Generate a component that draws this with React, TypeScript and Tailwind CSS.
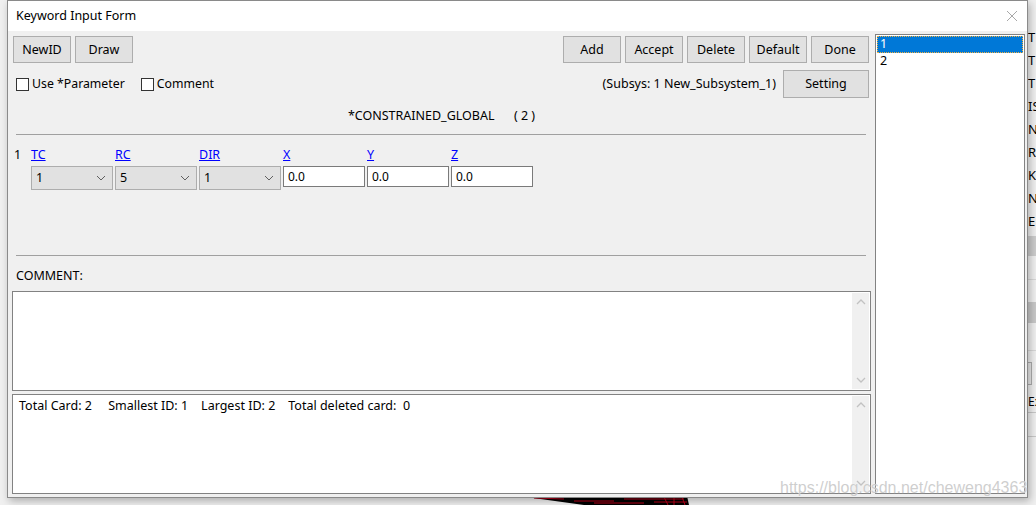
import React from "react";

const font = "font-['Noto_Sans','Liberation_Sans',sans-serif]";

function Btn({ label, w = "w-[58px]", h = "h-[27px]" }: { label: string; w?: string; h?: string }) {
  return (
    <div
      className={`${w} ${h} flex items-center justify-center bg-[#e1e1e1] border border-[#adadad] text-[12.5px] text-black pt-px`}
    >
      {label}
    </div>
  );
}

function Check({ label }: { label: string }) {
  return (
    <div className="flex items-center gap-[3px]">
      <div className="w-[13px] h-[13px] bg-white border border-[#333333]" />
      <span className="text-[12.3px] text-black leading-none">{label}</span>
    </div>
  );
}

function Chevron({ up, className = "" }: { up?: boolean; className?: string }) {
  return (
    <svg width="10" height="6" viewBox="0 0 10 6" className={className}>
      <path d={up ? "M1 5 L5 1 L9 5" : "M1 1 L5 5 L9 1"} fill="none" stroke="#c2c2c2" strokeWidth="1.3" />
    </svg>
  );
}

function Select({ value }: { value: string }) {
  return (
    <div className="w-[82px] h-[24px] bg-[#e1e1e1] border border-[#adadad] flex items-center justify-between pl-[4px] pr-[6px]">
      <span className="text-[12.5px] text-black">{value}</span>
      <svg width="10" height="6" viewBox="0 0 10 6">
        <path d="M1 1 L5 5 L9 1" fill="none" stroke="#606060" strokeWidth="1" />
      </svg>
    </div>
  );
}

function TextInput({ value }: { value: string }) {
  return (
    <div className="w-[82px] h-[21px] bg-white border border-[#7a7a7a] flex items-center pl-[4px]">
      <span className="text-[12px] text-black">{value}</span>
    </div>
  );
}

function Area({ children }: { children?: React.ReactNode }) {
  return (
    <div className="ml-[4px] w-[859px] h-[100px] bg-white border border-[#828282] flex">
      <div className="flex-1 pl-[6px] pt-[2px] text-[12.5px] text-black whitespace-pre">{children}</div>
      <div className="w-[17px] mt-[1px] mb-[1px] mr-[1px] bg-[#f0f0f0] flex flex-col items-center justify-between">
        <Chevron up className="mt-[6px]" />
        <Chevron className="mb-[6px]" />
      </div>
    </div>
  );
}

export default function App() {
  const bgLetters = ["T", "T", "T", "IS", "N", "R", "K", "N", "E"];
  return (
    <div className={`relative w-[1036px] h-[505px] overflow-hidden bg-[#f0f0f0] ${font}`}>
      {/* desktop background app (behind the window) */}
      <div className="absolute left-[1028px] top-[26px] flex flex-col text-[13px] text-black">
        {bgLetters.map((l, i) => (
          <div key={i} className="h-[23px] leading-[23px]">
            {l}
          </div>
        ))}
      </div>
      <div className="absolute left-[1026px] top-[236px] w-[10px] h-[20px] bg-[#cccccc]" />
      <div className="absolute left-[1026px] top-[279px] w-[10px] h-px bg-[#d8d8d8]" />
      <div className="absolute left-[1026px] top-[302px] w-[10px] h-[21px] bg-[#c8c8c8]" />
      <div className="absolute left-[1026px] top-[350px] w-[10px] h-px bg-[#d8d8d8]" />
      <div className="absolute left-[1024px] top-[362px] w-[8px] h-[23px] border border-[#adadad] bg-[#e8e8e8]" />
      <div className="absolute left-[1028px] top-[393px] text-[12px] text-black leading-[18px]">Ex</div>
      <div className="absolute left-[1026px] top-[412px] w-[10px] h-px bg-[#c8c8c8]" />
      <div className="absolute left-[1026px] top-[436px] w-[10px] h-px bg-[#c8c8c8]" />
      <svg className="absolute left-[524px] top-[496px]" width="168" height="9" viewBox="0 0 168 9">
        <polygon points="2,1 163,0 165,9 60,9" fill="#000" />
        <path
          d="M10 2 L40 3 M50 5 L90 5 M70 7 L120 7 M100 3 L160 3 M130 6 L163 6 M150 1 L150 9 M140 1 L144 9 M158 1 L161 9"
          stroke="#c0001a"
          strokeWidth="1"
        />
      </svg>

      {/* window */}
      <div className="absolute left-[7px] top-0 w-[1021px] h-[498px] border border-[#8a8a8a] bg-[#f0f0f0] flex flex-col shadow-[2px_3px_8px_rgba(0,0,0,0.28)]">
        {/* title bar */}
        <div className="h-[30px] bg-white flex items-center justify-between pl-[8px] pr-[8px]">
          <span className="text-[12.5px] text-black">Keyword Input Form</span>
          <svg width="12" height="12" viewBox="0 0 12 12" className="mr-[1px]">
            <path d="M1 1 L11 11 M11 1 L1 11" stroke="#a8a8a8" strokeWidth="1" />
          </svg>
        </div>

        {/* body */}
        <div className="flex flex-1">
          {/* left panel */}
          <div className="w-[867px] flex flex-col">
            {/* row 1 */}
            <div className="mt-[5px] flex justify-between pl-[5px] pr-[6px]">
              <div className="flex gap-[4px]">
                <Btn label="NewID" />
                <Btn label="Draw" />
              </div>
              <div className="flex gap-[4px]">
                <Btn label="Add" />
                <Btn label="Accept" />
                <Btn label="Delete" />
                <Btn label="Default" />
                <Btn label="Done" />
              </div>
            </div>
            {/* row 2 */}
            <div className="mt-[7px] h-[28px] flex items-center justify-between pl-[8px] pr-[6px]">
              <div className="flex items-center gap-[16px]">
                <Check label="Use *Parameter" />
                <Check label="Comment" />
              </div>
              <div className="flex items-center gap-[7px]">
                <span className="text-[12.5px] text-black">(Subsys: 1 New_Subsystem_1)</span>
                <Btn label="Setting" w="w-[86px]" h="h-[28px]" />
              </div>
            </div>
            {/* row 3 */}
            <div className="h-[36px] flex items-center justify-center pt-[1px]">
              <span className="text-[12.5px] text-black whitespace-pre">*CONSTRAINED_GLOBAL      ( 2 )</span>
            </div>
            <div className="ml-[8px] w-[850px] h-px bg-[#a0a0a0]" />
            {/* labels */}
            <div className="mt-[12px] h-[16px] flex items-center pl-[6px] text-[12.5px]">
              <span className="w-[17px] text-black">1</span>
              <div className="flex">
                {["TC", "RC", "DIR", "X", "Y", "Z"].map((l) => (
                  <span key={l} className="w-[84px] text-[#0000ff] underline">
                    {l}
                  </span>
                ))}
              </div>
            </div>
            {/* inputs */}
            <div className="mt-[3px] flex items-start gap-[2px] pl-[23px]">
              <Select value="1" />
              <Select value="5" />
              <Select value="1" />
              <TextInput value="0.0" />
              <TextInput value="0.0" />
              <TextInput value="0.0" />
            </div>
            <div className="mt-[65px] ml-[8px] w-[850px] h-px bg-[#a0a0a0]" />
            <div className="mt-[12px] h-[16px] flex items-center pl-[8px] text-[12.5px] text-black">COMMENT:</div>
            <div className="mt-[7px]">
              <Area />
            </div>
            <div className="mt-[3px]">
              <Area>{"Total Card: 2     Smallest ID: 1    Largest ID: 2    Total deleted card:  0"}</Area>
            </div>
          </div>

          {/* list box */}
          <div className="mt-[3px] w-[150px] h-[460px] bg-white border border-[#828282] flex flex-col p-[1px]">
            <div className="h-[17px] bg-[#0078d7] border border-dotted border-[#f0b040] flex items-center pl-[2px]">
              <span className="text-[12.5px] text-white">1</span>
            </div>
            <div className="h-[17px] flex items-center pl-[3px]">
              <span className="text-[12.5px] text-black">2</span>
            </div>
          </div>
        </div>
      </div>

      {/* watermark */}
      <div className="absolute left-[780px] top-[476px] text-[16px] font-['Liberation_Sans',sans-serif] text-[rgba(190,190,190,0.75)] [text-shadow:0_0_1px_rgba(255,255,255,0.9)] whitespace-nowrap">
        https://blog.csdn.net/cheweng4363
      </div>
    </div>
  );
}
